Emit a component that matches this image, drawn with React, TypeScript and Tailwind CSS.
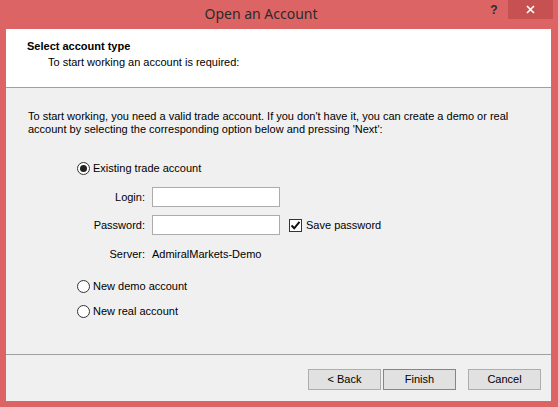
import React from "react";

const ui = { fontFamily: '"Liberation Sans", Arial, sans-serif' };

function Radio({ checked, label }: { checked?: boolean; label: string }) {
  return (
    <div className="flex items-center h-[13px]">
      <div className="w-[13px] h-[13px] rounded-full border border-[#333] bg-white flex items-center justify-center">
        {checked && <div className="w-[7px] h-[7px] rounded-full bg-[#222]" />}
      </div>
      <span className="ml-[3px] text-[11px] leading-[13px] text-black whitespace-nowrap">{label}</span>
    </div>
  );
}

function Btn({ label, focused }: { label: string; focused?: boolean }) {
  return (
    <div
      className={`w-[73px] h-[21px] flex items-center justify-center bg-[#e1e1e1] border text-[11px] text-black ${
        focused ? "border-[#3399ff]" : "border-[#adadad]"
      }`}
    >
      {label}
    </div>
  );
}

export default function App() {
  return (
    <div className="w-[558px] h-[407px] bg-[#dd6464] flex flex-col overflow-hidden" style={ui}>
      {/* title bar */}
      <div className="h-[29px] flex items-start">
        <div
          className="w-[486px] pl-[36px] text-center text-[14px] leading-[22px] pt-[3px] text-[#2b2b2b]"
          style={{ fontFamily: '"Noto Sans", "Open Sans", sans-serif' }}
        >
          Open an Account
        </div>
        <div className="w-[16px] h-[19px] flex items-center justify-center text-[12px] font-bold text-[#2b2b2b] leading-none pt-[1px]">
          ?
        </div>
        <div className="ml-[6px] w-[45px] h-[19px] bg-[#c75050] flex items-center justify-center">
          <svg width="9" height="9" viewBox="0 0 9 9">
            <path d="M1 1 L8 8 M8 1 L1 8" stroke="white" strokeWidth="1.6" />
          </svg>
        </div>
      </div>

      {/* client */}
      <div className="flex-1 ml-[6px] mr-[7px] mb-[6px] bg-[#f0f0f0] flex flex-col">
        {/* header */}
        <div className="h-[59px] bg-white border-b border-[#a0a0a0] pl-[21px] pt-[11px]">
          <div className="text-[11px] leading-[13px] font-bold text-black">Select account type</div>
          <div className="mt-[3px] pl-[21px] text-[11px] leading-[13px] text-black">
            To start working an account is required:
          </div>
        </div>

        {/* body */}
        <div className="flex-1 flex flex-col pl-[22px] pt-[22px]">
          <div className="text-[11px] leading-[13px] text-black whitespace-nowrap">
            To start working, you need a valid trade account. If you don't have it, you can create a demo or real
            <br />
            account by selecting the corresponding option below and pressing 'Next':
          </div>

          <div className="pl-[49px] mt-[26px]">
            <Radio checked label="Existing trade account" />
          </div>

          <div className="mt-[12px] flex items-center h-[20px]">
            <div className="w-[117px] text-right text-[11px] text-black">Login:</div>
            <div className="ml-[7px] w-[128px] h-[20px] bg-white border border-[#acacac]" />
          </div>

          <div className="mt-[8px] flex items-center h-[20px]">
            <div className="w-[117px] text-right text-[11px] text-black">Password:</div>
            <div className="ml-[7px] w-[128px] h-[20px] bg-white border border-[#acacac]" />
            <div className="ml-[9px] w-[13px] h-[13px] border border-[#333] bg-white flex items-center justify-center">
              <svg width="11" height="11" viewBox="0 0 11 11">
                <path d="M1.5 5.5 L4.2 8.3 L9.5 1.8" stroke="#111" strokeWidth="2" fill="none" />
              </svg>
            </div>
            <span className="ml-[4px] text-[11px] text-black">Save password</span>
          </div>

          <div className="mt-[13px] flex items-center h-[13px] text-[11px] text-black">
            <div className="w-[117px] text-right">Server:</div>
            <div className="ml-[7px]">AdmiralMarkets-Demo</div>
          </div>

          <div className="pl-[49px] mt-[19px]">
            <Radio label="New demo account" />
          </div>
          <div className="pl-[49px] mt-[12px]">
            <Radio label="New real account" />
          </div>
        </div>

        {/* footer */}
        <div className="border-t border-[#a0a0a0] pt-[14px] pb-[11px] pr-[10px] flex justify-end">
          <Btn label="< Back" />
          <div className="ml-[2px]">
            <Btn label="Finish" focused />
          </div>
          <div className="ml-[12px]">
            <Btn label="Cancel" />
          </div>
        </div>
      </div>
    </div>
  );
}
